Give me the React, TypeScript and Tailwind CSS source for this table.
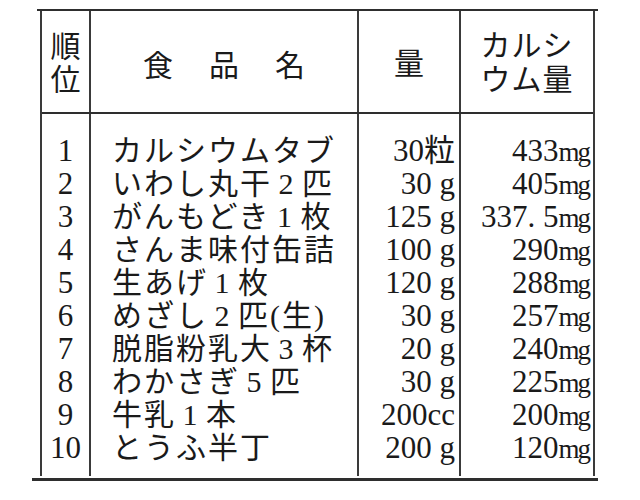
const rows = [
  { rank: "1", name: "カルシウムタブ", qty: "30粒", ca: "433" },
  { rank: "2", name: "いわし丸干2匹", qty: "30 g", ca: "405" },
  { rank: "3", name: "がんもどき1枚", qty: "125 g", ca: "337. 5" },
  { rank: "4", name: "さんま味付缶詰", qty: "100 g", ca: "290" },
  { rank: "5", name: "生あげ1枚", qty: "120 g", ca: "288" },
  { rank: "6", name: "めざし2匹(生)", qty: "30 g", ca: "257" },
  { rank: "7", name: "脱脂粉乳大3杯", qty: "20 g", ca: "240" },
  { rank: "8", name: "わかさぎ5匹", qty: "30 g", ca: "225" },
  { rank: "9", name: "牛乳1本", qty: "200cc", ca: "200" },
  { rank: "10", name: "とうふ半丁", qty: "200 g", ca: "120" },
];

// digits inside a name take a full-width box, as in the printed table
function Name({ text }: { text: string }) {
  return (
    <>
      {text.split("").map((ch, i) =>
        /[0-9]/.test(ch) ? (
          <span key={i} className="inline-block w-[30px] text-center">
            {ch}
          </span>
        ) : (
          <span key={i}>{ch}</span>
        ),
      )}
    </>
  );
}

export default function App() {
  return (
    <div className="h-[500px] w-[640px] overflow-hidden bg-white pt-[9px] font-['Liberation_Serif','Noto_Sans_CJK_JP',serif] text-[30px] leading-[33px] text-[#1a1a1a]">
      {/* top rule */}
      <div className="ml-[37px] h-[2px] w-[561px] bg-[#2e2e2e]" />

      <div className="ml-[40px] w-[555px] border-x-2 border-[#3a3a3a]">
        {/* header */}
        <div className="grid h-[103px] grid-cols-[47px_268px_102px_134px] border-b-2 border-[#2e2e2e]">
          <div className="flex flex-col items-center justify-center pt-[2px]">
            <span className="h-[33px]">順</span>
            <span className="h-[33px]">位</span>
          </div>
          <div className="flex items-center justify-center gap-[36px] border-l-2 border-[#3a3a3a] pt-[8px]">
            <span>食</span>
            <span>品</span>
            <span>名</span>
          </div>
          <div className="flex items-center justify-center border-l-2 border-[#3a3a3a] pt-[4px]">
            量
          </div>
          <div className="flex flex-col items-center justify-center border-l-2 border-[#3a3a3a] pt-[2px] tracking-[1px]">
            <span className="h-[34px] leading-[34px]">カルシ</span>
            <span className="h-[34px] leading-[34px]">ウム量</span>
          </div>
        </div>

        {/* body */}
        <div className="grid grid-cols-[47px_268px_102px_134px]">
          <div className="flex flex-col items-center pb-[12px] pt-[20px] text-[31px]">
            {rows.map((r) => (
              <span key={r.rank} className="h-[33px] leading-[33px]">
                {r.rank}
              </span>
            ))}
          </div>
          <div className="flex flex-col border-l-2 border-[#3a3a3a] pb-[12px] pl-[21px] pt-[20px] tracking-[2px]">
            {rows.map((r) => (
              <span key={r.rank} className="h-[33px] whitespace-nowrap leading-[33px]">
                <Name text={r.name} />
              </span>
            ))}
          </div>
          <div className="flex flex-col items-end border-l-2 border-[#3a3a3a] pb-[12px] pr-[4px] pt-[20px] text-[31px]">
            {rows.map((r) => (
              <span key={r.rank} className="h-[33px] whitespace-nowrap leading-[33px]">
                {r.qty}
              </span>
            ))}
          </div>
          <div className="flex flex-col items-end border-l-2 border-[#3a3a3a] pb-[12px] pr-[4px] pt-[20px] text-[31px]">
            {rows.map((r) => (
              <span key={r.rank} className="h-[33px] whitespace-nowrap leading-[33px]">
                {r.ca}
                <span className="text-[27px] tracking-[-2px]">mg</span>
              </span>
            ))}
          </div>
        </div>
      </div>

      {/* bottom rule */}
      <div className="ml-[32px] mt-[2px] h-[3px] w-[566px] bg-[#2e2e2e]" />
    </div>
  );
}
